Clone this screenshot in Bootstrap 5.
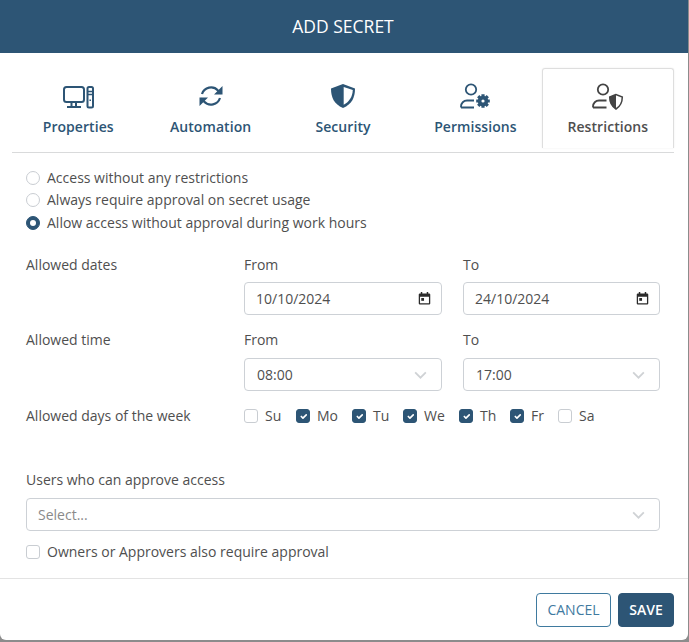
<!DOCTYPE html>
<html lang="en">
<head>
<meta charset="utf-8">
<title>Add secret</title>
<link href="https://cdn.jsdelivr.net/npm/bootstrap@5.3.0/dist/css/bootstrap.min.css" rel="stylesheet">
<style>
html,body{height:100%;}
body{background:#8c8c8c;font-family:"Open Sans","Liberation Sans",sans-serif;font-size:14px;color:#4f4f4f;overflow:hidden;}
.dlg{width:688px;height:640px;background:#fff;border-radius:0 0 6px 6px;display:flex;flex-direction:column;overflow:hidden;}
.dlg-head{background:#2d5575;color:#fff;height:53px;font-size:17.5px;line-height:53px;text-align:center;padding-right:2px;}
.tabs-wrap{margin:15px 14px 0 12px;border-bottom:1px solid #d9dadb;height:85px;display:flex;align-items:flex-start;}
.tab-item{flex:1 1 0;height:80px;display:flex;flex-direction:column;align-items:center;color:#2d5575;font-size:14px;font-weight:550;letter-spacing:.06px;text-decoration:none;border:1px solid transparent;border-bottom:0;padding-top:14px;}
.tab-item svg{height:28px;display:block;flex:none;}
.tab-item span{margin-top:6px;line-height:20px;}
.tab-item.current{color:#4f4f4f;border-color:#dedede;border-radius:3px 3px 0 0;box-shadow:0 0 2px rgba(0,0,0,.08);}
.form-area{padding:15px 29px 0 26px;flex:1 1 auto;line-height:20px;}
.opt{margin:0 0 2px;min-height:0;padding-left:21px;height:20px;line-height:20px;}
.opt:nth-child(2){margin-bottom:3px;}
.form-check-input{width:14px;height:14px;border-color:#c9cdd2;margin-top:3px;}
.form-check .form-check-input{margin-left:-21px;}
.form-check-input:checked{background-color:#2d5575;border-color:#2d5575;}
.form-check-input[type=radio]:checked{background-size:100%;}
.form-check-input[type=checkbox]{border-radius:3px;background-size:90%;}
.sub{display:block;margin-bottom:8px;line-height:20px;}
.row-dates .sub{margin-bottom:7.5px;}
.field-r{margin-left:21px;width:197px;}
.field-grid{display:grid;grid-template-columns:218px 198px 218px;}
.row-dates{margin-top:21.5px;}
.row-times{margin-top:15px;}
.row-days{margin-top:15px;}
.fc,.fs{height:33px;min-height:33px;font-size:14px;color:#4f4f4f;border:1px solid #cdd1d6;border-radius:4px;padding:0 11px;line-height:31px;}
.fc{background:#fff url("data:image/svg+xml,%3Csvg xmlns='http://www.w3.org/2000/svg' viewBox='0 0 14 14'%3E%3Cpath fill='%232b2b2b' d='M3 0h1.600v1.500h4.800V0H11v1.500h1A1.200 1.200 0 0 1 13.200 2.700v9.600A1.200 1.200 0 0 1 12 13.500H2A1.200 1.200 0 0 1 .8 12.300V2.700A1.200 1.200 0 0 1 2 1.500h1zM2.200 5v7.100h9.600V5z'/%3E%3Crect fill='%232b2b2b' x='3.500' y='6.500' width='3' height='3'/%3E%3C/svg%3E") no-repeat right 10px center/13px 13px;}
.fs{padding-left:12px;background:#fff url("data:image/svg+xml,%3Csvg xmlns='http://www.w3.org/2000/svg' viewBox='0 0 14 9'%3E%3Cpath fill='none' stroke='%23cfd2d5' stroke-width='2' d='M1 1.500l6 6 6-6'/%3E%3C/svg%3E") no-repeat right 14px center/13px 8px;}
.fs:focus,.fc:focus{box-shadow:none;}
.days{display:flex;height:20px;grid-column:2 / span 2;}
.day{display:flex;align-items:center;margin:0;padding:0;min-height:0;flex:none;}
.day .form-check-input{margin:0 7px 0 0;float:none;flex:none;}
.w1{width:52px}.w2{width:56px}.w3{width:51px}.w4{width:56px}.w5{width:51px}.w6{width:48px}
.users-lbl{margin-top:44px;}
.wide{width:634px;color:#8a8a8a;padding-left:11px;}
.owners{margin-top:11px;}
.dlg-foot{border-top:1px solid #e3e3e3;height:62px;display:flex;justify-content:flex-end;align-items:flex-start;padding:14px 14px 0 0;gap:7px;}
.btn-c,.btn-s{height:34px;font-size:14px;border-radius:4px;padding:0;line-height:32px;}
.btn-c{width:75px;color:#3f7a9f;background:#fff;border:1px solid #3f7a9f;}
.btn-s{width:56px;color:#fff;background:#2d5575;border:1px solid #2d5575;font-weight:600;}
</style>
</head>
<body>
<div class="dlg">
  <div class="dlg-head">ADD SECRET</div>
  <div class="tabs-wrap">
    <a class="tab-item" href="#">
      <svg width="32" height="28" viewBox="0 0 32 28" fill="none" stroke="#2d5575"><rect x="2" y="4" width="20" height="15" rx="2.500" stroke-width="2"/><path stroke-width="2" d="M9.500 19v4M14 19v4M5 24h14"/><rect x="25.500" y="4" width="5.500" height="20.500" rx="1.500" stroke-width="2"/><path stroke-width="1.500" d="M26 8.500h4M26 11.500h4M28.200 16.500v1.500"/></svg>
      <span>Properties</span></a>
    <a class="tab-item" href="#">
      <svg width="26" height="28" viewBox="0 0 26 28" fill="none" stroke="#2d5575" stroke-width="2.200"><path d="M4 11a9.500 9.500 0 0 1 16-3.500l3 3"/><path d="M22 15a9.500 9.500 0 0 1-16 3.500l-3-3"/><path fill="#2d5575" stroke="none" d="M24.500 3v8.500h-8.500zM1.500 23v-8.500h8.500z"/></svg>
      <span>Automation</span></a>
    <a class="tab-item" href="#">
      <svg width="26" height="28" viewBox="0 0 26 28"><path fill="#2d5575" d="M13 1 1 5.500c0 9 3 15.500 12 19.500 9-4 12-10.500 12-19.500z"/><path fill="#fff" d="M13.700 4v17.800c5.500-3.100 8.800-7.800 9.100-14.800z"/></svg>
      <span>Security</span></a>
    <a class="tab-item" href="#">
      <svg width="34" height="28" viewBox="0 0 34 28" fill="none" stroke="#2d5575" stroke-width="1.800"><circle cx="13" cy="6.500" r="5.200"/><path d="M3 24.500v-1a6 6 0 0 1 6-6h7M3 24.500h13"/><circle cx="25" cy="18" r="3.400" stroke-width="3.600"/><path stroke-width="3.200" d="M25 11.200v3M25 21.800v3M18.200 18h3M28.800 18h3M20.200 13.200l2.200 2.200M27.600 20.600l2.200 2.200M29.800 13.200l-2.200 2.200M22.400 20.600l-2.200 2.200"/></svg>
      <span>Permissions</span></a>
    <a class="tab-item current" href="#">
      <svg width="34" height="28" viewBox="0 0 34 28" fill="none" stroke="#444" stroke-width="1.800"><circle cx="12" cy="6.500" r="5.200"/><path d="M2 24.500v-1a6 6 0 0 1 6-6h7.500M2 24.500h13.500"/><path stroke-width="1.500" d="M25 11.500l-6.300 2.500c0 5.500 1.500 9 6.300 12 4.800-3 6.300-6.500 6.300-12z"/><path fill="#444" stroke="none" d="M25 11.500l-6.300 2.500c0 5.500 1.500 9 6.300 12z"/></svg>
      <span>Restrictions</span></a>
  </div>

  <div class="form-area">
    <div class="form-check opt"><input class="form-check-input" type="radio" name="mode" id="m1"><label class="form-check-label" for="m1">Access without any restrictions</label></div>
    <div class="form-check opt"><input class="form-check-input" type="radio" name="mode" id="m2"><label class="form-check-label" for="m2">Always require approval on secret usage</label></div>
    <div class="form-check opt"><input class="form-check-input" type="radio" name="mode" id="m3" checked><label class="form-check-label" for="m3">Allow access without approval during work hours</label></div>

    <div class="field-grid row-dates">
      <div>Allowed dates</div>
      <div><label class="sub">From</label><input class="form-control fc" type="text" value="10/10/2024"></div>
      <div class="field-r"><label class="sub">To</label><input class="form-control fc" type="text" value="24/10/2024"></div>
    </div>
    <div class="field-grid row-times">
      <div>Allowed time</div>
      <div><label class="sub">From</label><div class="form-control fs">08:00</div></div>
      <div class="field-r"><label class="sub">To</label><div class="form-control fs">17:00</div></div>
    </div>
    <div class="field-grid row-days">
      <div>Allowed days of the week</div>
      <div class="days">
        <label class="day w1"><input class="form-check-input" type="checkbox">Su</label>
        <label class="day w2"><input class="form-check-input" type="checkbox" checked>Mo</label>
        <label class="day w3"><input class="form-check-input" type="checkbox" checked>Tu</label>
        <label class="day w4"><input class="form-check-input" type="checkbox" checked>We</label>
        <label class="day w5"><input class="form-check-input" type="checkbox" checked>Th</label>
        <label class="day w6"><input class="form-check-input" type="checkbox" checked>Fr</label>
        <label class="day"><input class="form-check-input" type="checkbox">Sa</label>
      </div>
    </div>

    <label class="sub users-lbl">Users who can approve access</label>
    <div class="form-control fs wide">Select...</div>
    <div class="form-check opt owners"><input class="form-check-input" type="checkbox" id="own"><label class="form-check-label" for="own">Owners or Approvers also require approval</label></div>
  </div>

  <div class="dlg-foot">
    <button type="button" class="btn btn-c">CANCEL</button>
    <button type="button" class="btn btn-s">SAVE</button>
  </div>
</div>
</body>
</html>
